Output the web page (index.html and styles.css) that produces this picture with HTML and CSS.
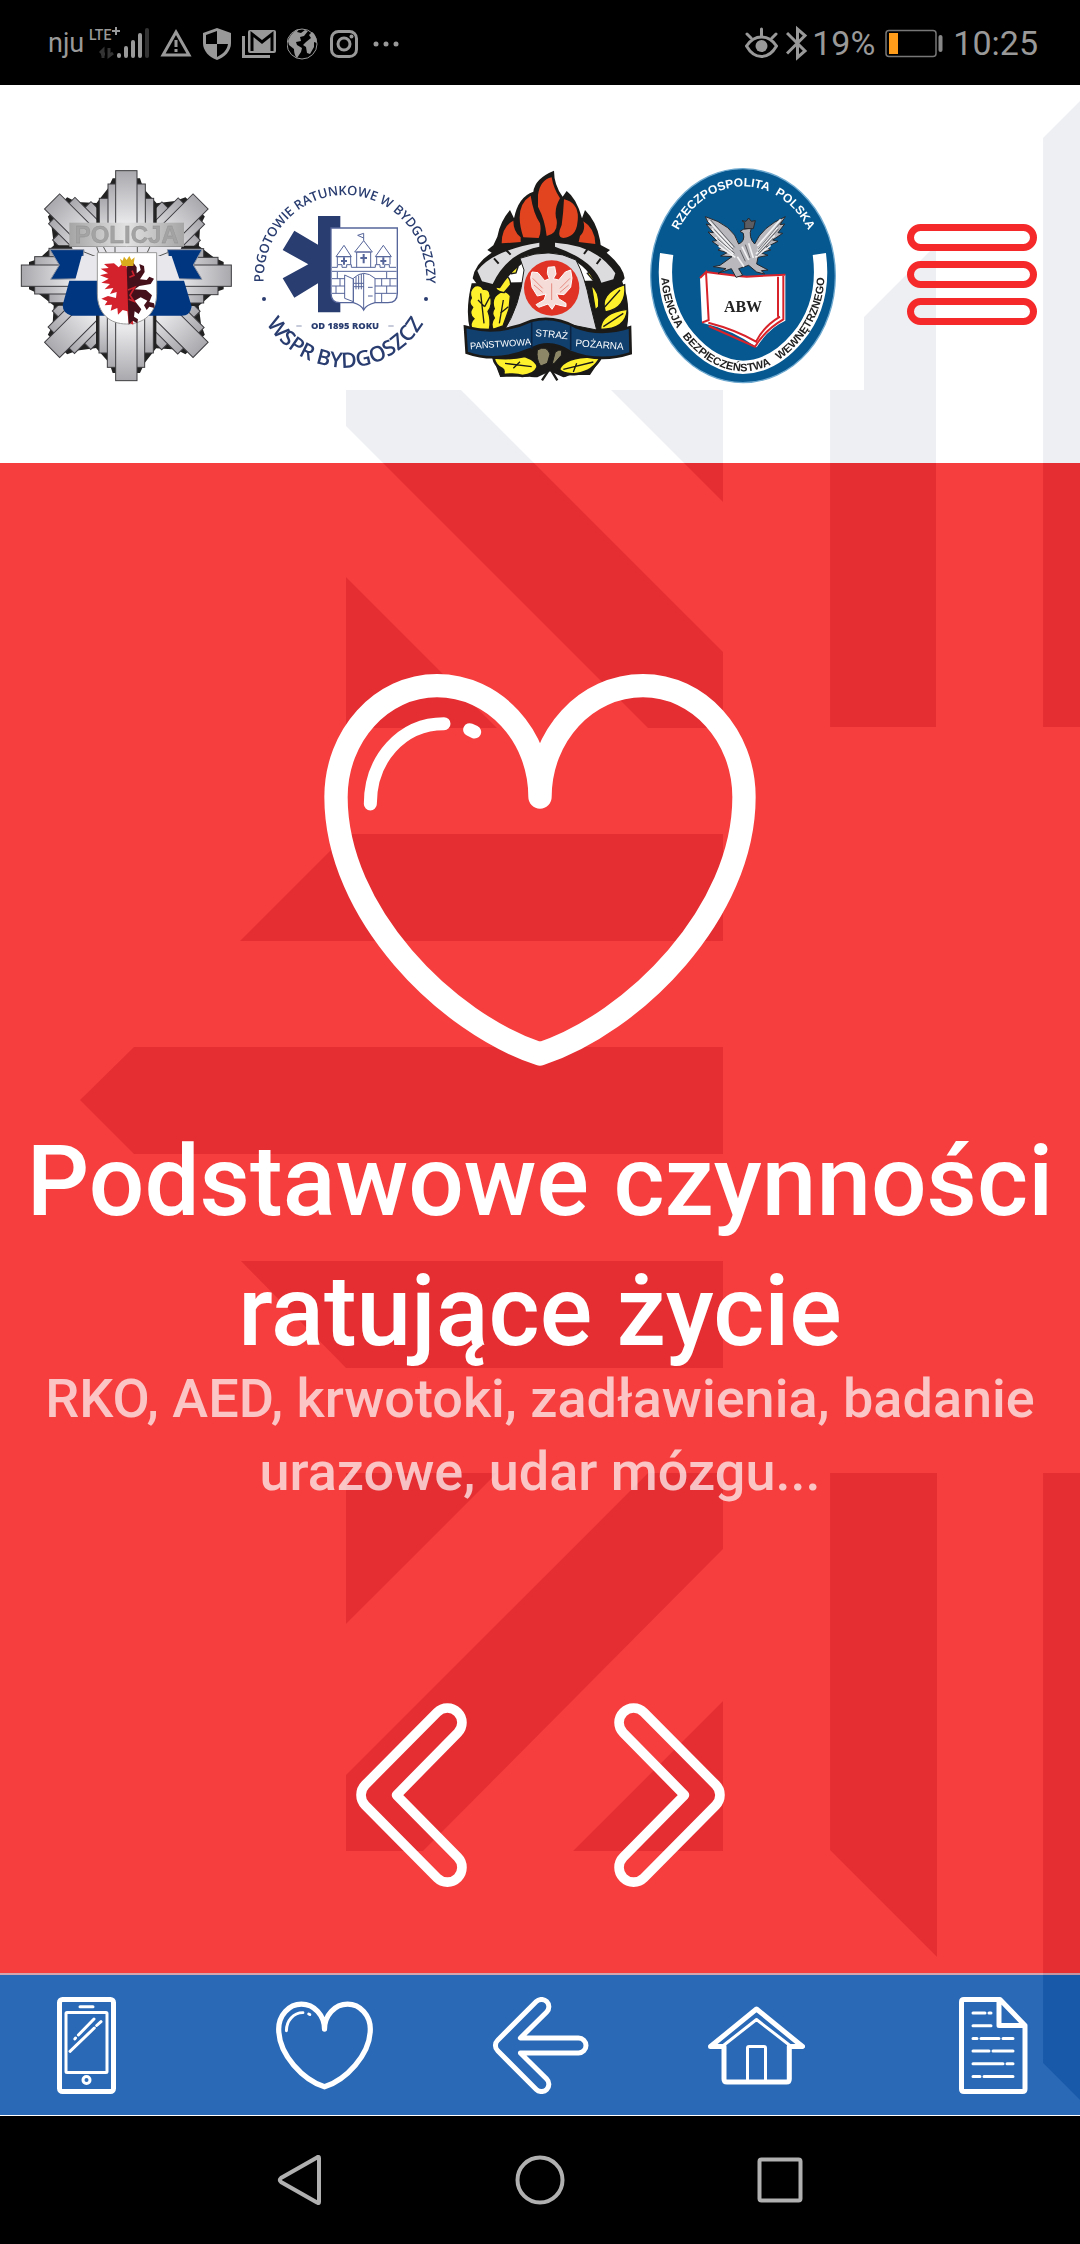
FILE: index.html
```html
<!DOCTYPE html>
<html lang="pl">
<head>
<meta charset="utf-8">
<meta name="viewport" content="width=device-width, initial-scale=1">
<title>Podstawowe czynności ratujące życie</title>
<link rel="stylesheet" href="styles.css">
</head>
<body>
<svg class="defs" aria-hidden="true">
  <symbol id="heart" viewBox="72 102 1296 1176">
    <g fill="none" stroke="#fff" stroke-linecap="round" stroke-linejoin="round">
      <path stroke-width="70" d="M720 471C720 287 582 137 411 137C244 137 108 287 108 471C108 820 440 1150 720 1242C1000 1150 1332 820 1332 471C1332 287 1196 137 1029 137C858 137 720 287 720 471"/>
      <path stroke-width="39" d="M211 492C211 358 304 251 432 251M509 269L524 276"/>
    </g>
  </symbol>
</svg>

<div class="status">
  <div class="status-group">
    <span class="carrier">nju</span>
    <svg width="60" height="36" viewBox="89 24 60 36">
      <text x="89" y="39" class="lte">LTE</text>
      <path d="M116 26v8M112 30h8" stroke="#999" stroke-width="2"/>
      <path d="M103 57V49l-3 3M109 47v8l4-3M101 53h4" stroke="#333" stroke-width="3" fill="none"/>
      <g stroke-width="4" stroke-linecap="round" stroke="#999"><path d="M119 54v1M126 47v8M133 41v14M140 34v21"/><path stroke="#333" d="M147 29v26"/></g>
    </svg>
    <svg width="32" height="36" viewBox="160 24 32 36"><path d="M176 31l13 23h-26z" fill="none" stroke="#999" stroke-width="3"/><path d="M176 39v7M176 48v3" stroke="#999" stroke-width="3"/></svg>
    <svg width="28" height="36" viewBox="204 24 28 36"><path d="M218 27l14 5v10c0 8-6 14-14 17c-8-3-14-9-14-17V32z" fill="#999"/><path d="M218 30v13h-11v-9zM218 43h11c-1 6-5 10-11 13z" fill="#000"/></svg>
    <svg width="34" height="36" viewBox="243 24 34 36"><rect x="249" y="29" width="28" height="23" rx="2" fill="#999"/><path d="M253 50V33l10 8l10-8v17" fill="none" stroke="#000" stroke-width="3"/><path d="M244.500 35v20.500H271" fill="none" stroke="#999" stroke-width="3"/></svg>
    <svg width="32" height="36" viewBox="287 24 32 36"><circle cx="302" cy="43" r="15" fill="#000" stroke="#999" stroke-width="1"/><path d="M288 40c2-6 6-10 11-12l-2 3 4 1 4-3 3 1-4 5-4 1 1 4-5 1 1 3 5 3-1 4-4 6c-2-1-3-6-3-9l-5-4zM306 41l5-4-2-3 3-3c3 2 5 6 5 11l-3-1v5l-4 7-3-1-1-6-3-2z" fill="#999"/></svg>
    <svg width="28" height="36" viewBox="330 24 28 36"><rect x="331.500" y="30.500" width="25" height="25" rx="7" fill="none" stroke="#999" stroke-width="3"/><circle cx="344" cy="43" r="6" fill="none" stroke="#999" stroke-width="3"/><circle cx="351.500" cy="35.500" r="2" fill="#999"/></svg>
    <svg width="34" height="36" viewBox="370 24 34 36"><g fill="#999"><circle cx="377" cy="43" r="2.500"/><circle cx="387" cy="43" r="2.500"/><circle cx="397" cy="43" r="2.500"/></g></svg>
  </div>
  <div class="status-group status-right">
    <svg width="33" height="36" viewBox="744 24 33 36"><path d="M745.500 45c8-12 22-12 30 0c-8 14-22 14-30 0z" fill="none" stroke="#999" stroke-width="3"/><circle cx="760.500" cy="45" r="6" fill="#999"/><path d="M760.500 28v7M746 33l4 4M775 33l-4 4" stroke="#999" stroke-width="3" stroke-linecap="round"/></svg>
    <svg class="bluetooth" width="22" height="36" viewBox="788 24 22 36"><path d="M789 32l18 18-7.500 6.500V28l7.500 6.500-18 18" fill="none" stroke="#999" stroke-width="3"/></svg>
    <span class="clock">19%</span>
    <svg class="battery" width="58" height="36" viewBox="886 24 58 36"><rect x="887" y="29.500" width="50" height="26" rx="3" fill="none" stroke="#777" stroke-width="1.500"/><rect x="890" y="32" width="9" height="21" fill="#ff9c1a"/><rect x="939.500" y="34" width="4" height="17" rx="2" fill="#888"/></svg>
    <span class="clock">10:25</span>
  </div>
</div>

<div class="app">
  <svg class="pattern" viewBox="0 85 1080 2031" preserveAspectRatio="xMidYMin slice" aria-hidden="true">
    <path d="M1043 138l37-37V727h-37zM830 351L936 245V727H830zM346 390H461L723 652V728H648L346 426zM611 390H723V502zM346 577L497 728H346z
      M347 834H723V941H240zM134 1047H723V1154H134L80 1100zM241 1261H723V1368H346z
      M346 1473H497L346 1624zM648 1473H723V1549L423 1851H346V1775zM723 1701V1851H573zM830 1473H937V1957L830 1850zM1043 1473h37V2100l-37-37z"/>
  </svg>

  <header class="header">
    <div class="logos">
      <svg viewBox="0 24 720 696" role="img" aria-label="Policja">
        <defs>
          <linearGradient id="steel" x1="0" y1="0" x2="0" y2="1"><stop offset="0" stop-color="#a9a9ad"/><stop offset=".5" stop-color="#e9e9ec"/><stop offset="1" stop-color="#ededf0"/></linearGradient>
          <linearGradient id="plate"><stop offset="0" stop-color="#a5a5a5"/><stop offset=".5" stop-color="#e2e2e2"/><stop offset="1" stop-color="#a5a5a5"/></linearGradient>
          <g id="ray">
            <path d="M289 377V160l35-45 14-30h82l10 30 40 45V377z" fill="#222" stroke="none"/>
            <rect x="298" y="145" width="163" height="232"/><rect x="324" y="102" width="112" height="275"/><rect x="347" y="62" width="64" height="315"/>
          </g>
        </defs>
        <g fill="url(#steel)" stroke="#3c3c40" stroke-width="3">
          <use href="#ray" transform="rotate(45 379 377)"/><use href="#ray" transform="rotate(135 379 377)"/><use href="#ray" transform="rotate(225 379 377)"/><use href="#ray" transform="rotate(315 379 377)"/>
          <use href="#ray"/><use href="#ray" transform="rotate(90 379 377)"/><use href="#ray" transform="rotate(180 379 377)"/><use href="#ray" transform="rotate(270 379 377)"/>
        </g>
        <path d="M215 290H545L500 400H260z" fill="#e6e6ea"/>
        <path d="M310 290l16 30M290 290l10 30M450 290l-14 30M345 290v20M412 290v20M250 305l50 20M510 305l-50 20" stroke="#555" stroke-width="3"/>
        <rect x="208" y="218" width="344" height="72" fill="url(#plate)"/>
        <text x="380" y="279" text-anchor="middle" class="policja">POLICJA</text>
        <g fill="#003580" stroke="#8d93a0" stroke-width="3">
          <path d="M150 299H252L240 386 152 388 178 345zM502 299H606L580 345 606 388 520 386z"/>
        </g>
        <path d="M245 318L225 392H540L515 318z" fill="#e8e8ec"/>
        <path d="M208 392H552L575 470Q570 497 545 497H215Q188 490 188 465z" fill="#003580"/>
        <path d="M292 308H470V430C470 492 430 522 380 522C330 522 292 492 292 430z" fill="#fff" stroke="#999" stroke-width="3"/>
        <path d="M380 350l-10-12-14 14-14-12-30 2 14 12-24 2 22 14-24 6 26 10-22 12 26 4-16 16 26-4-10 18 20-6-2 18-24-6-20 8 18 8-8 12 22-2-4 18 20-8 2 20 14-14 14 4 4 34 14 6z" fill="#d4222c"/>
        <path d="M380 350l20-12 10 14v18l12-10-4-18 14 6 2 18-14 22 20 2 8-10 14 6-10 16-34 6-14 10 34 2 18 16-8 20 14 4 2 14-16-4-8 10-8-14 10-14-20-10-18 10 20 26-8 14-12-8-2 16 12 8-2 12-14-8-12 12z" fill="#46101a"/>
        <path d="M384 420l20-8-14 24 12 18-16-6M396 362l6 14-14 6" fill="none" stroke="#c9202c" stroke-width="5"/>
        <path d="M360 326l8 6 4-12 8 10 8-12 6 12 10-8-4 26h-34z" fill="#d9ac1d"/>
      </svg>

      <svg viewBox="0 24 630 696" role="img" aria-label="WSPR Bydgoszcz">
        <path id="arcTop" d="M71 386A244 253 0 0 1 559 390" fill="none"/>
        <path id="arcBottom" d="M72 507A275 275 0 0 0 558 507" fill="none"/>
        <text class="wspr-top"><textPath href="#arcTop" startOffset="50%">POGOTOWIE RATUNKOWE W BYDGOSZCZY</textPath></text>
        <text class="wspr-bottom"><textPath href="#arcBottom" startOffset="50%">WSPR BYDGOSZCZ</textPath></text>
        <path d="M234 198H301V487H234V400L163 443 128 385 205 343 128 300 163 242 234 284z" fill="#2a3d70"/>
        <g fill="#fff" stroke="#56659a" stroke-width="3">
          <path d="M273 234H472V430Q472 458 444 458H405Q378 465 371 480Q364 465 340 458H300Q273 458 273 430z" stroke-width="4"/>
          <path d="M276 352h16v-8h14v8h14v-8h14v8h72v-8h14v8h14v-8h14v8h20M276 364H470M292 343V320H332V343M288 320l24-34 22 34zM410 343V320H450V343M406 320l24-34 24 34zM350 352V306H392V352M344 306l27-34 26 34zM371 272v-22l-18 6 18 8"/>
          <path d="M276 386H315M276 408H315M276 430H315M405 386H470M405 408H470M405 430H470M292 366v20M300 386v22M288 408v22M440 366v20M425 386v22M450 386v22M440 408v22M425 430v26" fill="none"/>
          <path d="M340 458V385Q371 355 405 385V458M314 375l26 12v68l-26-10zM371 371v108M348 380v38M356 376v42M364 372v46M342 400h30M342 410h30M384 412h14M384 438h14" fill="none"/>
          <path d="M312 322v22M303 333h18M371 312v28M361 324h20M430 322v22M421 333h18" stroke-width="6"/>
        </g>
        <circle cx="72" cy="447" r="6" fill="#2a3d70"/><circle cx="558" cy="447" r="6" fill="#2a3d70"/>
        <path d="M169 528h16M445 528h16" stroke="#8d96b4" stroke-width="3"/>
        <text x="315" y="537" class="wspr-year">OD 1895 ROKU</text>
      </svg>

      <svg viewBox="0 24 570 696" role="img" aria-label="Państwowa Straż Pożarna">
        <path d="M65 400Q45 480 60 540L120 600 150 680H240L275 690 325 690 360 675H420L470 600 530 540Q545 460 515 390z" fill="#1b1a18"/>
        <path d="M40 622L125 622 150 682H262L300 664 340 682H420L456 622 560 622V720H40z" fill="#fff"/>
        <g fill="#fff22d" stroke="#1b1a18" stroke-width="4">
          <path d="M70 410q20-10 30 8q18-2 20 16q10 30-6 50q10 26 4 54H66q-8-20 6-32q-18-14-4-34q-14-12-4-28q-8-22 8-34z"/>
          <path d="M135 440q28-30 46-2l-4 40-18 50-30 10q-8-20 4-34q-10-14 0-28q-8-20 2-36z"/>
          <path d="M150 380q30-10 32 24l-20 24q-30-4-24-24zM176 355l14-14 14 10-6 18-14 2z"/>
          <path d="M524 404q8 70-58 82q-20-56 58-82zM532 478q-4 60-80 60q0-50 80-60zM424 406q26 20 22 64l-10 10zM412 370l14-6 22 30 4 24z"/>
          <path stroke-width="8" d="M130 622q50 6 95-4q38 14 38 34q-10 24-46 26q-20-8-60-2q8-14-2-20q-20-8-25-34zM326 658q20-44 128-38q-24 46-74 52q-40 4-54-14z"/>
        </g>
        <path d="M92 430l10 90M120 440l-16 30M84 450l20 20M160 450l-12 70M175 470l-24 20M510 420l-54 60M520 490l-60 40M165 640l80 10M210 635l-20 20M340 658l90-22M380 640l-10 26" stroke="#1b1a18" stroke-width="4"/>
        <path d="M112 300L130 286L142 260Q150 215 180 180L192 205Q205 140 250 125Q255 85 312 62Q312 105 338 140L350 123Q380 145 396 205L405 180Q440 215 450 270L452 285L480 300L470 308Q520 350 524 385L508 405L440 415Q420 350 350 320H250Q190 350 150 415L85 408L68 385Q75 340 125 308z" fill="#1b1a18"/>
        <path d="M155 280Q155 230 190 212Q190 245 212 262V276zM220 262Q190 170 242 137Q250 190 270 220Q275 245 266 264zM264 135Q270 90 305 82Q310 115 330 145Q310 180 320 210Q325 250 290 258Q285 210 264 170zM342 148Q392 160 382 220Q378 260 340 264Q318 262 335 225Q340 190 342 148zM390 258Q408 240 400 214Q435 235 436 282L386 276z" fill="#e24420"/>
        <path d="M82 362Q130 300 268 278V290Q170 310 128 402L96 394zM315 278Q440 285 496 370L490 388 454 398Q430 330 315 290z" fill="#dcdcdf"/>
        <path d="M132 325l14 16M168 300l14 14M440 342l12-16M402 312l10-14" stroke="#1b1a18" stroke-width="6"/>
        <path d="M210 325Q300 290 378 330Q405 380 420 460L440 540 340 520 250 510 160 545Q210 470 222 360z" fill="#d9d9dd" stroke="#1b1a18" stroke-width="3"/>
        <circle cx="305" cy="414" r="83" fill="#e03225"/>
        <path d="M294 352l20-2 4 22-8 14 16 4 20-24 16-6 4 24-4 28-20 22-22-2 6 14 22 14v10l-18-4-14-4-10 16-12-16-28 10-8-8 24-14 6-18-26 6-16-26-4-30 4-16 18 2 20 24 14-6-6-16z" fill="#f6dcd8" stroke="#fff" stroke-width="3"/>
        <path d="M248 385l30 30M252 405l26 22M360 385l-30 30M356 405l-26 22M305 400v50" stroke="#e58a80" stroke-width="3"/>
        <path d="M45 530L62 534Q150 555 245 512Q310 495 375 530Q450 560 540 532L542 610Q450 640 360 605Q300 565 240 598Q140 640 50 608z" fill="#11406f" stroke="#1b1a18" stroke-width="8"/>
        <path d="M245 516V596M362 528V600" stroke="#0b2340" stroke-width="5"/>
        <text class="psp" x="152" y="591" transform="rotate(-4 152 591)">PAŃSTWOWA</text>
        <text class="psp psp-mid" x="304" y="563" transform="rotate(6 304 563)">STRAŻ</text>
        <text class="psp psp-end" x="448" y="594" transform="rotate(4 448 594)">POŻARNA</text>
        <path d="M262 600q28-16 38 12l-8 28-20 8q-14-20-10-48zM316 606q24-16 18 10l-30 34z" fill="#8d8768" stroke="#1b1a18" stroke-width="3"/>
        <path d="M300 655l-24 36M300 655l22 36M290 640l12 16 10-16" stroke="#1b1a18" stroke-width="7" fill="none"/>
      </svg>

      <svg viewBox="0 24 672 696" role="img" aria-label="Agencja Bezpieczeństwa Wewnętrznego">
        <ellipse cx="309" cy="377" rx="277" ry="321" fill="#065890" stroke="#6fa9cf" stroke-width="4"/>
        <path d="M80 312Q60 460 145 562Q220 650 309 652Q400 650 473 562Q558 460 538 312" fill="none" stroke="#fff" stroke-width="40"/>
        <path id="abwTop" d="M108 256A225 262 0 0 1 512 256" fill="none"/>
        <path id="abwBottom" d="M65 318Q52 470 138 572Q215 662 309 664Q405 662 480 572Q566 470 553 318" fill="none"/>
        <text class="abw-top"><textPath href="#abwTop" startOffset="50%">RZECZPOSPOLITA&#160; POLSKA</textPath></text>
        <text class="abw-bottom"><textPath href="#abwBottom" startOffset="50%">AGENCJA&#160;&#160; BEZPIECZEŃSTWA&#160;&#160; WEWNĘTRZNEGO</textPath></text>
        <path d="M180 384L198 366Q270 376 320 380L436 374V512Q385 535 350 592Q280 540 186 518z" fill="#fff"/>
        <path d="M180 384L198 366L206 510L186 518M198 366Q270 376 320 380L436 374M414 380V500M430 376V510M206 528L345 590Q375 540 430 508M205 518Q290 540 348 575Q370 530 420 500" fill="none" stroke="#d8232a" stroke-width="6"/>
        <text x="309" y="485" class="abw">ABW</text>
        <g fill="#b9b9bd" stroke="#26282d" stroke-width="3">
          <path d="M310 238l-10 6 10 6q6 24-14 32Q280 225 196 200q6 20 18 26l-16-4 22 26-16-2 26 26-14 2 28 20-10 6 28 8-20 10 34 2-36 26-20 4 38 6-24 14 40-14 14 26 20-6-12-20 30-10 24 20 24 6-10-10 20-2-34-18 4-20 30-6-22-8 30-8-14-8 36-18-16-4 30-20-14-2 20-26-14 2 16-24q-70 30-92 82q-20-20-10-48z"/>
          <path d="M314 236v-18l-8-6 12 2 8-10 8 10 12-2-6 24z" fill="#5c5d62"/>
        </g>
        <path d="M206 212l72 80M216 236l60 66M226 262l54 50M236 288l50 34M422 208l-70 80M412 232l-60 68M404 256l-56 56M392 286l-46 36M306 290l20 40M326 280l14 44M292 320l20 30" stroke="#f1f1f3" stroke-width="5"/>
        <path d="M212 210l72 82M222 238l58 60M232 266l52 44M428 210l-74 88M416 236l-62 70M400 264l-50 54M300 300l16 34M316 284l14 40" stroke="#33353b" stroke-width="2"/>
      </svg>
    </div>
    <button class="menu" type="button" aria-label="Menu"><span></span><span></span><span></span></button>
  </header>

  <main class="hero">
    <svg class="hero-heart" viewBox="0 0 1296 1176" aria-hidden="true"><use href="#heart"/></svg>
    <h1 class="title">Podstawowe czynności ratujące życie</h1>
    <p class="subtitle">RKO, AED, krwotoki, zadławienia, badanie urazowe, udar mózgu...</p>
    <div class="pager">
      <button type="button" aria-label="Poprzedni"><svg viewBox="106 68 334 554"><path d="M350 96A43.800 43.800 0 0 1 412 158L228 345 412 532A43.800 43.800 0 0 1 350 594L134 376A43.800 43.800 0 0 1 134 314z"/></svg></button>
      <button type="button" aria-label="Następny"><svg viewBox="106 68 334 554"><path d="M196 96A43.800 43.800 0 0 0 134 158L318 345 134 532A43.800 43.800 0 0 0 196 594L412 376A43.800 43.800 0 0 0 412 314z"/></svg></button>
    </div>
  </main>

  <nav class="tabs" aria-label="Nawigacja">
    <a href="#telefon" aria-label="Telefon"><svg viewBox="0 0 97 97">
      <rect x="21.500" y="2.500" width="54" height="92" rx="3"/>
      <g class="thin"><path d="M42 9.700H55M56 22L40.400 38M37.500 41L36.800 42M63 24.700L58.700 28.500M56.300 31L32 54.300"/><rect x="28" y="15.500" width="41" height="60" rx="1"/><circle cx="48.500" cy="83" r="3.500"/></g></svg></a>
    <a href="#pomoc" aria-label="Pierwsza pomoc"><svg viewBox="0 0 97 97"><use href="#heart" x="0" y="4" width="97" height="89"/></svg></a>
    <a href="#wstecz" aria-label="Wstecz"><svg viewBox="0 0 97 97"><path d="M44.300 4.600A7.300 7.300 0 0 1 54.700 15L28.400 41H86.500A7.500 7.500 0 0 1 86.500 56H28.400L54.700 82A7.300 7.300 0 0 1 44.300 92.400L5.700 53.800A7.300 7.300 0 0 1 5.700 43.200z"/></svg></a>
    <a href="#start" aria-label="Start"><svg viewBox="0 0 97 97"><path d="M16 49.500H2.500L48.500 12 94.500 49.500H81.300M16 49.500V82Q16 85 19 85H78.500Q81.300 85 81.300 82V49.500"/><path class="thin" d="M16 48L48.500 22.500 81.300 48M39.500 84V51Q39.500 49.500 41 49.500H56Q57.500 49.500 57.500 51V84"/></svg></a>
    <a href="#dokumenty" aria-label="Dokumenty"><svg viewBox="0 0 97 97"><path d="M55 2.500H19Q16.500 2.500 16.500 5V92Q16.500 94.500 19 94.500H77.500Q80 94.500 80 92V28.500zM54 3V28.500H80"/><path class="thin" d="M28 16H40M44 16H46M28 28.700H46M28 41.500H32M36 41.500H54M58 41.500H68M28 54H44M48 54H68M28 66.700H58M62 66.700H68M28 79.500H35M39 79.500H68"/></svg></a>
  </nav>
</div>

<div class="system">
  <button type="button" aria-label="Wstecz"><svg viewBox="0 0 50 50"><path d="M44 3Q44 1 42 2.500L6 23Q3.500 25 6 27L42 47.500Q44 49 44 47z"/></svg></button>
  <button type="button" aria-label="Ekran główny"><svg viewBox="0 0 50 50"><circle cx="25" cy="25" r="22.500"/></svg></button>
  <button type="button" aria-label="Ostatnie"><svg viewBox="0 0 50 50"><rect x="4.500" y="4.500" width="41" height="41" rx="2"/></svg></button>
</div>
</body>
</html>
```
FILE: styles.css
```css
* { box-sizing: border-box; }

body {
  margin: 0;
  min-height: 100vh;
  display: flex;
  flex-direction: column;
  background: #000;
  font-family: Roboto, "Noto Sans", sans-serif;
}

svg { display: block; }
button { border: 0; padding: 0; background: none; }

.defs { position: absolute; width: 0; height: 0; }

/* Status bar */
.status {
  height: 85px;
  padding: 0 42px 0 48px;
  display: flex;
  align-items: center;
  justify-content: space-between;
  color: #999;
}
.status-group { display: flex; align-items: center; gap: 11px; }
.status-right { gap: 8px; }
.status-right .battery { margin: 0 2px; }
.status-right .bluetooth { margin-right: -4px; }
.carrier { font-size: 27px; margin-right: -6px; }
.clock { font-size: 34px; }
.lte { font: 500 14px Roboto, sans-serif; fill: #999; }

/* App area */
.app {
  position: relative;
  isolation: isolate;
  flex: 1;
  display: flex;
  flex-direction: column;
  background: #fff;
}
.pattern {
  position: absolute;
  inset: 0;
  width: 100%;
  height: 100%;
  fill: #11100c;
  mix-blend-mode: difference;
  pointer-events: none;
}

.header {
  height: 378px;
  display: flex;
  align-items: center;
}
.logos {
  position: relative;
  width: 80%;
  background: #fff;
  display: grid;
  grid-template-columns: 240fr 210fr 190fr 224fr;
}
.logos svg { width: 100%; }
.policja { font: bold 72px "Liberation Sans", sans-serif; fill: #a3a3a3; stroke: #8e8e8e; stroke-width: 1px; }
.wspr-top, .wspr-bottom, .wspr-year, .psp, .abw, .abw-top, .abw-bottom { text-anchor: middle; }
.wspr-top { font: 600 39px "Open Sans", sans-serif; fill: #2a3d70; }
.wspr-bottom { font: 600 64px "Open Sans", sans-serif; fill: #2a3d70; }
.wspr-year { font: 800 28px "Open Sans", sans-serif; fill: #2a3d70; }
.psp { font: 28px "Liberation Sans", sans-serif; fill: #fff; }
.psp-mid { font-size: 30px; }
.psp-end { font-size: 30px; }
.abw { font: bold 48px "Liberation Serif", serif; fill: #222; }
.abw-top { font: bold 36px "Liberation Sans", sans-serif; fill: #fff; }
.abw-bottom { font: bold 33px "Liberation Sans", sans-serif; fill: #222; }

.menu {
  position: relative;
  width: 130px;
  margin: 0 auto;
  display: grid;
  gap: 10px;
}
.menu span { height: 27px; border: 7px solid #f52929; border-radius: 14px; }

.hero {
  flex: 1;
  padding: 211px 16px 86px;
  display: flex;
  flex-direction: column;
  align-items: center;
  background: #f63e3e;
  text-align: center;
  color: #fff;
}
.hero > * { position: relative; }
.hero-heart { width: 432px; }
.title { margin: 51px 0 0; font-size: 98px; line-height: 130px; font-weight: 500; }
.subtitle { margin: -15px 0 0; font-size: 54px; line-height: 73px; font-weight: 500; color: rgba(255, 255, 255, .7); }
.pager { margin-top: 195px; display: flex; gap: 147px; }
.pager svg { width: 111px; fill: none; stroke: #fff; stroke-width: 29; stroke-linejoin: round; }

.tabs {
  border-top: 2px solid #d2a6ae;
  border-bottom: 1px solid #fff;
  height: 143px;
  padding: 0 38px;
  display: flex;
  align-items: center;
  justify-content: space-between;
  background: #2a69b5;
}
.tabs a { position: relative; flex: 216 1 0; display: flex; justify-content: center; }
.tabs a:first-child { flex-grow: 178; justify-content: flex-start; }
.tabs a:last-child { flex-grow: 178; justify-content: flex-end; }
.tabs svg { width: 97px; height: 97px; fill: none; stroke: #fff; stroke-width: 5; stroke-linecap: round; stroke-linejoin: round; }
.tabs .thin { stroke-width: 3; }

/* System navigation */
.system { height: 128px; display: flex; justify-content: center; align-items: center; }
.system button { width: 240px; display: flex; justify-content: center; }
.system svg { width: 50px; fill: none; stroke: #b0b0b0; stroke-width: 4; }
```
